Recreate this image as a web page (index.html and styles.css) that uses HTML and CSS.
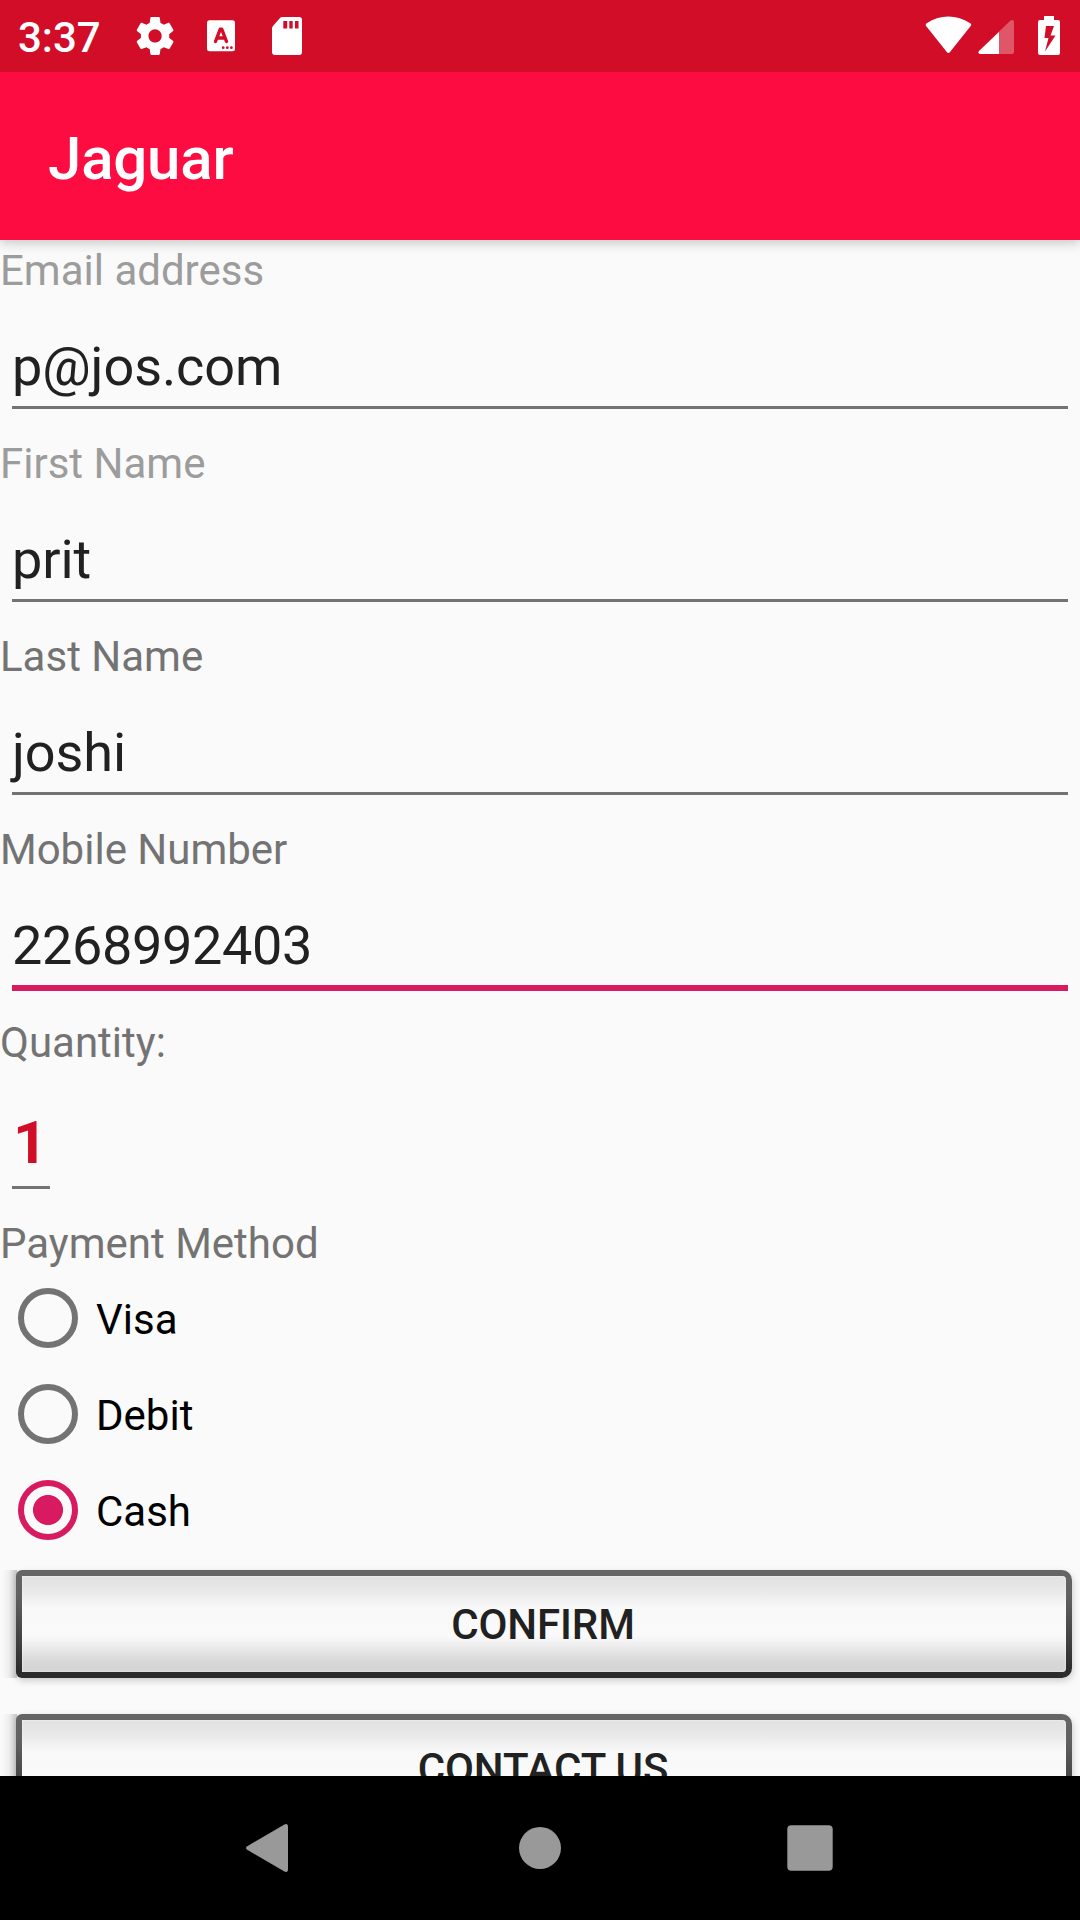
FILE: index.html
```html
<!DOCTYPE html>
<html lang="en">
<head>
<meta charset="utf-8">
<title>Jaguar</title>
<link rel="stylesheet" href="styles.css">
</head>
<body>
<div class="screen">
  <div class="status-bar">
    <span class="clock">3:37</span>
    <svg class="status-left" width="180" height="72" viewBox="0 0 180 72" fill="#fff">
      <g transform="translate(4.400 13.300) scale(1.89)"><path d="M19.43 12.98c.04-.32.07-.64.07-.98s-.03-.66-.07-.98l2.11-1.65c.19-.15.24-.42.12-.64l-2-3.46c-.12-.22-.39-.3-.61-.22l-2.49 1c-.52-.4-1.08-.73-1.69-.98l-.38-2.65C14.46 2.18 14.25 2 14 2h-4c-.25 0-.46.18-.49.42l-.38 2.65c-.61.25-1.17.59-1.69.98l-2.49-1c-.23-.09-.49 0-.61.22l-2 3.46c-.13.22-.07.49.12.64l2.11 1.65c-.04.32-.07.65-.07.98s.03.66.07.98l-2.11 1.65c-.19.15-.24.42-.12.64l2 3.46c.12.22.39.3.61.22l2.49-1c.52.4 1.08.73 1.69.98l.38 2.65c.03.24.24.42.49.42h4c.25 0 .46-.18.49-.42l.38-2.65c.61-.25 1.17-.59 1.69-.98l2.49 1c.23.09.49 0 .61-.22l2-3.46c.12-.22.07-.49-.12-.64l-2.11-1.65zM12 15.5c-1.93 0-3.5-1.57-3.5-3.5s1.57-3.5 3.5-3.5 3.5 1.57 3.5 3.5-1.57 3.5-3.5 3.5z"/></g>
      <rect x="79" y="20.300" width="28" height="31" rx="2.500"/>
      <path d="M87.500 41.500L92.200 29.300H93.800L98.500 41.500M89.500 38H96.500" fill="none" stroke="#d20d28" stroke-width="3.400" stroke-linecap="round" stroke-linejoin="round"/>
      <g fill="#d20d28"><circle cx="95.200" cy="47.700" r="1.400"/><circle cx="99.300" cy="47.700" r="1.400"/><circle cx="103.400" cy="47.700" r="1.400"/></g>
      <path fill-rule="evenodd" d="M154 17H171.200Q174 17 174 20V52Q174 55 171.200 55H147Q144 55 144 52V28.500Q144 27 145 26L152 18Q153 17 154 17ZM155.300 21V28.500H159.200V21ZM161.300 21V28.500H164.700V21ZM167 21V28.500H170.500V21Z"/>
    </svg>
    <svg class="status-right" width="150" height="72" viewBox="0 0 150 72" fill="#fff">
      <path d="M2.300 26.200Q.9 24.800 2.300 23.400C15.500 14.200 33 14.200 46.600 23.400Q48.200 24.800 46.500 26.200L26 52Q24.400 54 22.800 52Z"/>
      <path d="M90 22V52Q90 54 88 54H57Q53.500 53.500 55 51L86.500 20.600Q90 18.800 90 22Z" opacity=".3"/>
      <path d="M75 32V54H57Q53 53.500 55 51Z"/>
      <path fill-rule="evenodd" d="M120 16H130V20H134Q136 20 136 22V53Q136 55 134 55H116Q114 55 114 53V22Q114 20 116 20H120ZM122 26L120.500 38H124.500L121 51.500L131.500 35.500H126.500L130 26Z"/>
    </svg>
  </div>
  <header class="app-bar">Jaguar</header>
  <main class="form">
    <div class="label hint">Email address</div>
    <div class="field"><span class="value">p@jos.com</span></div>
    <div class="label hint">First Name</div>
    <div class="field"><span class="value">prit</span></div>
    <div class="label">Last Name</div>
    <div class="field"><span class="value">joshi</span></div>
    <div class="label">Mobile Number</div>
    <div class="field focused"><span class="value">2268992403</span></div>
    <div class="label">Quantity:</div>
    <div class="field quantity"><span class="value">1</span></div>
    <div class="label">Payment Method</div>
    <div class="option"><span class="radio"></span><span class="option-text">Visa</span></div>
    <div class="option"><span class="radio"></span><span class="option-text">Debit</span></div>
    <div class="option"><span class="radio checked"></span><span class="option-text">Cash</span></div>
    <div class="button-row"><div class="button">CONFIRM</div></div>
    <div class="button-row"><div class="button">CONTACT US</div></div>
  </main>
  <nav class="nav-bar">
    <svg width="54" height="54" viewBox="0 0 54 54"><path d="M7.200 25.200L44 3.700Q48 1.800 48 6V48Q48 52.200 44 50.300L7.200 28.800Q4.800 27 7.200 25.200Z"/></svg>
    <svg width="48" height="54" viewBox="0 0 48 54"><circle cx="24" cy="27" r="21"/></svg>
    <svg width="48" height="54" viewBox="0 0 48 54"><rect x="1.300" y="4.300" width="45.400" height="45.400" rx="4"/></svg>
  </nav>
</div>
</body>
</html>
```
FILE: styles.css
```css
* { box-sizing: border-box; }
body {
  margin: 0;
  font-family: Roboto, sans-serif;
  font-size: 42px;
}
.screen {
  display: flex;
  flex-direction: column;
  width: 1080px;
  height: 1920px;
  overflow: hidden;
  background: #fafafa;
}
.status-bar {
  display: flex;
  flex: none;
  z-index: 2;
  height: 72px;
  padding-left: 18px;
  padding-right: 6px;
  background: #d20d28;
  color: #fff;
}
.clock {
  width: 110px;
  line-height: 75px;
  font-weight: 500;
}
.status-right { margin-left: auto; }
.app-bar {
  flex: none;
  z-index: 1;
  height: 168px;
  padding-left: 48px;
  background: #fd0c41;
  box-shadow: 0 2px 12px rgba(0, 0, 0, .24);
  color: #fff;
  font-size: 60px;
  font-weight: 500;
  letter-spacing: -.2px;
  line-height: 174px;
}
.form {
  flex: 1;
  min-height: 0;
  overflow: hidden;
}
.label {
  height: 57px;
  line-height: 62px;
  color: #737373;
}
.hint { color: #9c9c9c; }
.field {
  height: 136px;
  padding: 0 12px 24px;
  color: #212121;
  font-size: 54px;
}
.value {
  display: block;
  height: 112px;
  border-bottom: 3px solid #737373;
  letter-spacing: -.1px;
  line-height: 140px;
}
.focused .value {
  height: 115px;
  border-bottom: 6px solid #d81b60;
  letter-spacing: -.35px;
}
.quantity {
  width: 62px;
  height: 144px;
  color: #d20d28;
  font-size: 60px;
  font-weight: 700;
}
.quantity .value {
  height: 120px;
  padding-left: 1px;
  line-height: 148px;
}
.option {
  display: flex;
  align-items: center;
  gap: 18px;
  height: 96px;
  padding-left: 18px;
  line-height: 60px;
  color: #000;
}
.option-text { padding-top: 3px; }
.radio {
  width: 60px;
  height: 60px;
  border: 6px solid #737373;
  border-radius: 50%;
}
.checked {
  border-color: #d81b60;
  background: radial-gradient(circle, #d81b60 14.600px, transparent 15.400px);
}
.button-row {
  height: 144px;
  padding: 12px 8px 24px 2px;
  background: linear-gradient(to right, transparent 2px, #ededed 9px, #c4c4c4 17px, transparent 17px) 0 12px / 100% 108px no-repeat;
}
.button {
  height: 108px;
  margin-left: 14px;
  padding-right: 2px;
  border: 6px solid transparent;
  border-radius: 6px 10px 10px 6px;
  background:
    linear-gradient(#e1e1e1, #e7e7e7 14%, #f8f8f8 32%, #fafafa 62%, #f0f0f0 70%, #d8d8d8 89%, #d4d4d4) padding-box,
    linear-gradient(#666, #606060 25%, #2c2c2c 94%) border-box;
  box-shadow: 1px 3px 7px rgba(0, 0, 0, .18), inset 0 0 2px #fff;
  color: #212121;
  font-weight: 500;
  letter-spacing: -.1px;
  line-height: 98px;
  text-align: center;
}
.nav-bar {
  display: flex;
  flex: none;
  align-items: center;
  justify-content: space-between;
  height: 144px;
  padding: 0 246px 0 240px;
  background: #000;
}
.nav-bar svg { fill: #999; }
```
